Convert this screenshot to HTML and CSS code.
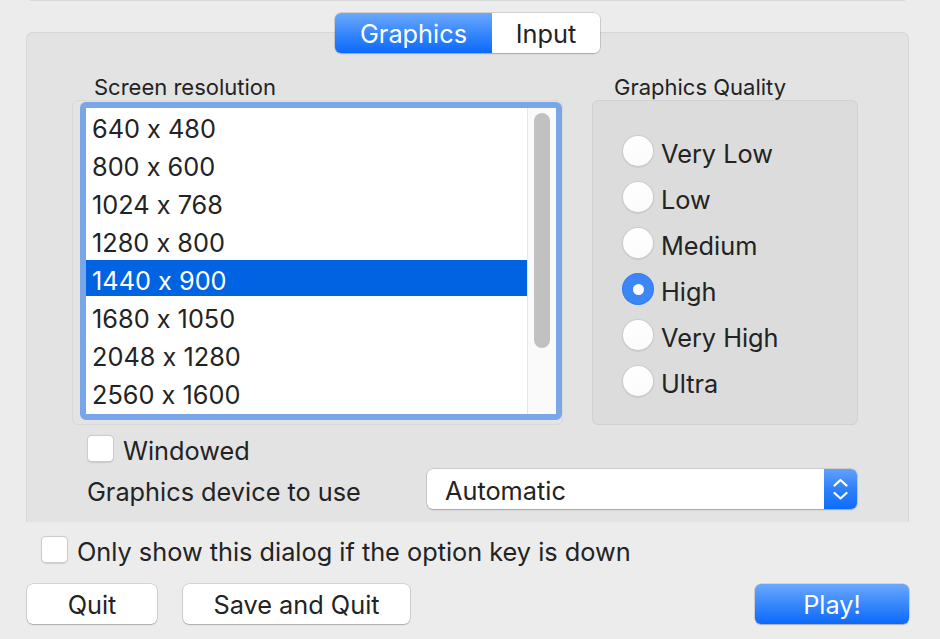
FILE: index.html
```html
<!DOCTYPE html>
<html>
<head>
<meta charset="utf-8">
<title>Launcher</title>
<link rel="stylesheet" href="styles.css">
</head>
<body>
<div class="window">
  <div class="topline"></div>
  <div class="group">
    <div class="seg">
      <div class="seg-item seg-on">Graphics</div>
      <div class="seg-item seg-off">Input</div>
    </div>
    <div class="cols">
      <div class="col-left">
        <div class="caption">Screen resolution</div>
        <div class="listbox">
          <div class="ring">
            <div class="list">
              <div class="rows">
                <div class="row"><span>640 x 480</span></div>
                <div class="row"><span>800 x 600</span></div>
                <div class="row"><span>1024 x 768</span></div>
                <div class="row"><span>1280 x 800</span></div>
                <div class="row row-sel"><span>1440 x 900</span></div>
                <div class="row"><span>1680 x 1050</span></div>
                <div class="row"><span>2048 x 1280</span></div>
                <div class="row"><span>2560 x 1600</span></div>
              </div>
              <div class="scroller"><div class="knob"></div></div>
            </div>
          </div>
        </div>
      </div>
      <div class="col-right">
        <div class="caption">Graphics Quality</div>
        <div class="qbox">
          <div class="radio-row"><span class="radio"></span><span class="txt">Very Low</span></div>
          <div class="radio-row"><span class="radio"></span><span class="txt">Low</span></div>
          <div class="radio-row"><span class="radio"></span><span class="txt">Medium</span></div>
          <div class="radio-row"><span class="radio radio-on"></span><span class="txt">High</span></div>
          <div class="radio-row"><span class="radio"></span><span class="txt">Very High</span></div>
          <div class="radio-row"><span class="radio"></span><span class="txt">Ultra</span></div>
        </div>
      </div>
    </div>
    <div class="check-row windowed">
      <span class="checkbox"></span><span class="txt">Windowed</span>
    </div>
    <div class="device-row">
      <span class="txt">Graphics device to use</span>
      <div class="popup">
        <span class="popup-txt">Automatic</span>
        <span class="stepper">
          <svg width="33" height="40" viewBox="0 0 33 40">
            <polyline points="10.5,16.5 16.5,11 22.5,16.5" fill="none" stroke="#fff" stroke-width="2.3" stroke-linecap="round" stroke-linejoin="round"/>
            <polyline points="10.5,24 16.5,29.5 22.5,24" fill="none" stroke="#fff" stroke-width="2.3" stroke-linecap="round" stroke-linejoin="round"/>
          </svg>
        </span>
      </div>
    </div>
  </div>
  <div class="check-row only">
    <span class="checkbox"></span><span class="txt">Only show this dialog if the option key is down</span>
  </div>
  <div class="buttons">
    <div class="btn btn-quit">Quit</div>
    <div class="btn btn-save">Save and Quit</div>
    <div class="btn btn-play">Play!</div>
  </div>
</div>
</body>
</html>
```
FILE: styles.css
```css
* { box-sizing: border-box; }
html, body { margin: 0; padding: 0; }
body {
  width: 940px;
  height: 639px;
  overflow: hidden;
  background: #ececec;
  font-family: "Inter", "Roboto", sans-serif;
  font-size: 25.3px;
  font-feature-settings: "calt" 0;
  color: #232323;
}
.window { width: 940px; height: 639px; }

.topline {
  height: 1px;
  margin: 0 35px 0 30px;
  background: #d9d9d9;
}

/* group box */
.group {
  margin: 31px 31px 0 26px;
  width: 883px;
  background: #e3e3e3;
  border: 1px solid #d6d6d6;
  border-bottom: none;
  border-radius: 7px 7px 0 0;
  padding-bottom: 13px;
}

/* segmented control */
.seg {
  display: flex;
  width: 265px;
  height: 40px;
  margin: -20px auto 0;
  border-radius: 6px;
  box-shadow: 0 0 0 0.5px rgba(0,0,0,0.22), 0 1px 1.5px rgba(0,0,0,0.18);
  overflow: hidden;
}
.seg-item {
  display: flex;
  align-items: center;
  justify-content: center;
}
.seg-on {
  width: 157px;
  color: #fff;
  background: linear-gradient(#6ca8fd, #3888fb 50%, #0b69fb);
}
.seg-off {
  width: 108px;
  background: #fff;
}

/* columns */
.cols {
  display: flex;
  margin-top: 21px;
  padding-left: 45px;
}
.col-left { width: 491px; }
.col-right { width: 266px; margin-left: 29px; }
.caption {
  height: 26px;
  line-height: 26px;
  font-size: 22px;
  padding-left: 22px;
}

/* resolution list */
.listbox {
  width: 491px;
  height: 325px;
  border: 1px solid #d8d8d8;
  border-radius: 6px;
  padding: 1px 0 4px 7px;
}
.ring {
  width: 482px;
  height: 318px;
  border: 6px solid #79a6e8;
  border-radius: 6px;
}
.list {
  display: flex;
  height: 306px;
  background: #fff;
}
.rows { flex: 1; }
.row {
  height: 36px;
  margin-bottom: 2px;
  padding: 5px 0 0 6px;
  line-height: 31px;
  white-space: nowrap;
}
.row-sel {
  background: #0063e1;
  color: #fff;
}
.scroller {
  width: 29px;
  background: #fafafa;
  border-left: 1px solid #e6e6e6;
  padding: 5px 0 0 6px;
}
.knob {
  width: 16px;
  height: 235px;
  border-radius: 8px;
  background: #c1c1c1;
}

/* quality radios */
.qbox {
  height: 325px;
  background: #dcdcdc;
  border: 1px solid #d1d1d1;
  border-radius: 6px;
  padding: 27px 0 0 29px;
}
.radio-row {
  display: flex;
  align-items: center;
  height: 46px;
  gap: 7px;
}
.txt { padding-top: 4px; white-space: nowrap; }
.radio {
  flex: none;
  width: 32px;
  height: 32px;
  border-radius: 50%;
  background: linear-gradient(#ffffff, #fbfbfb);
  box-shadow: inset 0 0 0 1px rgba(0,0,0,0.2), 0 0.5px 1px rgba(0,0,0,0.15);
}
.radio-on {
  display: flex;
  align-items: center;
  justify-content: center;
  background: #3b87f8;
  box-shadow: inset 0 0 0 1px rgba(0,60,200,0.15);
}
.radio-on::after {
  content: "";
  width: 11px;
  height: 11px;
  border-radius: 50%;
  background: #fff;
}

/* checkboxes */
.check-row {
  display: flex;
  align-items: center;
  height: 27px;
  gap: 9px;
}
.checkbox {
  flex: none;
  width: 27px;
  height: 27px;
  border-radius: 5px;
  background: #fff;
  box-shadow: inset 0 0 0 1px rgba(0,0,0,0.2), 0 0.5px 1px rgba(0,0,0,0.12);
}
.windowed {
  margin-top: 10px;
  padding-left: 60px;
}
.only {
  margin-top: 14px;
  padding-left: 41px;
}

/* device popup */
.device-row {
  display: flex;
  align-items: center;
  height: 40px;
  margin-top: 7px;
  padding: 0 51px 0 60px;
}
.popup {
  display: flex;
  align-items: center;
  width: 430px;
  height: 40px;
  margin-left: auto;
  background: #fff;
  border-radius: 6px;
  box-shadow: 0 0 0 0.5px rgba(0,0,0,0.2), 0 1px 1.5px rgba(0,0,0,0.2);
  overflow: hidden;
}
.popup-txt {
  flex: 1;
  padding: 2px 0 0 18px;
}
.stepper {
  width: 33px;
  height: 40px;
  background: linear-gradient(#62a1fb, #2f80f9 50%, #0d6cfb);
}
.stepper svg { display: block; }

/* buttons */
.buttons {
  display: flex;
  margin-top: 21px;
  padding: 0 31px 0 27px;
}
.btn {
  display: flex;
  align-items: center;
  justify-content: center;
  height: 40px;
  border-radius: 6px;
  background: #fff;
  box-shadow: 0 0 0 0.5px rgba(0,0,0,0.2), 0 1px 1.5px rgba(0,0,0,0.2);
}
.btn-quit { width: 130px; }
.btn-save { width: 227px; margin-left: 26px; }
.btn-play {
  width: 154px;
  margin-left: auto;
  color: #fff;
  background: linear-gradient(#6ca8fd, #3888fb 50%, #0b69fb);
}
```
